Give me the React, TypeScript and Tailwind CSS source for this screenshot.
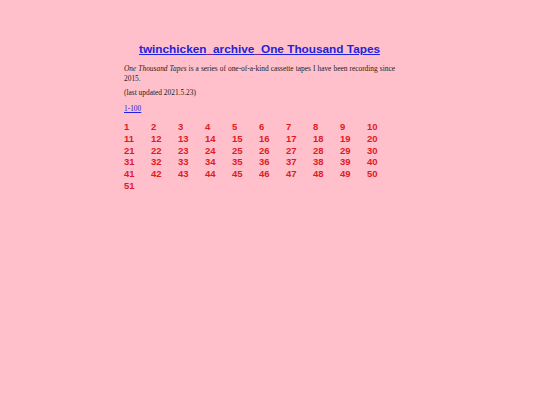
export default function App() {
  const nums = Array.from({ length: 51 }, (_, i) => i + 1);

  return (
    <div className="min-h-[405px] w-full bg-[#ffc0cb]">
      <div className="ml-[124px] w-[271px] pt-[41px]">
        <h1 className="whitespace-nowrap text-center font-['Liberation_Sans',Arial,sans-serif] text-[11.8px] font-bold leading-[16px]">
          <a href="#" className="text-[#2222dd] underline">
            twinchicken<span className="text-[#e01b24]">_</span>archive<span className="text-[#e01b24]">_</span>One Thousand Tapes
          </a>
        </h1>

        <p className="mt-[7px] text-justify font-['Liberation_Serif','Times_New_Roman',serif] text-[7.4px] leading-[10px] text-[#222]">
          <i>One Thousand Tapes</i> is a series of one-of-a-kind cassette tapes I have been recording since 2015.
        </p>

        <p className="mt-[4px] font-['Liberation_Serif','Times_New_Roman',serif] text-[7.4px] leading-[10px] text-[#222]">
          (last updated 2021.5.23)
        </p>

        <p className="mt-[6px] font-['Liberation_Serif','Times_New_Roman',serif] text-[7.4px] leading-[10px]">
          <a href="#" className="text-[#2222dd] underline">1-100</a>
        </p>

        <div className="mt-[7px] grid grid-cols-[repeat(10,27px)] font-['Liberation_Sans',Arial,sans-serif] text-[9.5px] font-bold leading-[11.8px] text-[#e01b24]">
          {nums.map(n => (
            <span key={n}>{n}</span>
          ))}
        </div>
      </div>
    </div>
  );
}
